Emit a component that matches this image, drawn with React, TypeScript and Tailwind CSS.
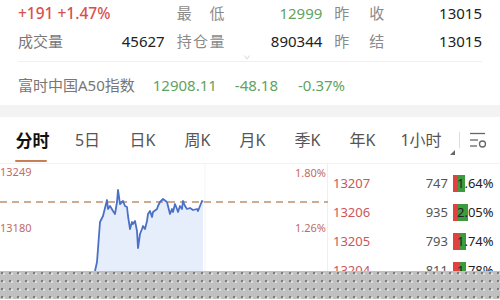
import React from "react";

const pts: [number, number][] = [
  [95, 272], [97, 263], [100, 223], [103, 217], [106, 205], [107, 201], [108, 210], [110, 207],
  [113, 212], [115, 215], [117, 203], [118, 191], [120, 205], [123, 202], [125, 207], [127, 208],
  [128, 217], [130, 230], [132, 223], [133, 225], [135, 222], [137, 232], [138, 249], [140, 235],
  [142, 230], [143, 227], [145, 230], [147, 222], [148, 215], [150, 212], [152, 218], [153, 213],
  [157, 210], [158, 207], [160, 203], [163, 200], [167, 203], [168, 207], [170, 215], [172, 210],
  [173, 213], [175, 205], [177, 210], [178, 213], [180, 207], [182, 210], [183, 202], [185, 207],
  [187, 210], [190, 209], [193, 211], [197, 210], [198, 212], [200, 207], [202, 202], [203, 203],
];

const TOP = 165;
const linePath = pts.map(([x, y], i) => `${i ? "L" : "M"}${x} ${y - TOP}`).join(" ");
const fillPath = `${linePath} L203 110 L95 110 Z`;

const book = [
  { p: "13207", v: "747", pct: "1.64%", red: 5, green: 7 },
  { p: "13206", v: "935", pct: "2.05%", red: 5, green: 10 },
  { p: "13205", v: "793", pct: "1.74%", red: 7, green: 6 },
  { p: "13204", v: "811", pct: "1.78%", red: 6, green: 7 },
];

const tabs = ["分时", "5日", "日K", "周K", "月K", "季K", "年K", "1小时"];

export default function App() {
  const font = { fontFamily: '"Noto Sans", "Noto Sans CJK SC", sans-serif' };
  return (
    <div className="w-[500px] h-[300px] overflow-hidden bg-white text-[15px] text-[#222]" style={font}>
      {/* header */}
      <div className="relative h-[62px] mx-[18px] border-b border-[#f0f0f0]">
        <div className="flex h-[27px] items-center leading-none">
          <div className="w-[147px] text-[#d8504d] text-[15.5px] font-medium">+191 +1.47%</div>
          <div className="ml-[12px] w-[48px] flex justify-between text-[#8a8a8a]"><span>最</span><span>低</span></div>
          <div className="w-[98px] text-right text-[#5fa35f]">12999</div>
          <div className="ml-[12px] w-[50px] flex justify-between text-[#8a8a8a]"><span>昨</span><span>收</span></div>
          <div className="w-[98px] text-right">13015</div>
        </div>
        <div className="flex h-[28px] items-center leading-none">
          <div className="w-[94px] text-[#777]">成交量</div>
          <div className="w-[53px] text-right">45627</div>
          <div className="ml-[12px] w-[48px] flex justify-between text-[#8a8a8a]"><span>持</span><span>仓</span><span>量</span></div>
          <div className="w-[98px] text-right">890344</div>
          <div className="ml-[12px] w-[50px] flex justify-between text-[#8a8a8a]"><span>昨</span><span>结</span></div>
          <div className="w-[98px] text-right">13015</div>
        </div>
        <svg className="absolute left-[226px] top-[55px]" width="6" height="5" viewBox="0 0 6 5">
          <path d="M0.5 0.5 L3 4 L5.5 0.5" fill="none" stroke="#d5d5d5" strokeWidth="1" />
        </svg>
      </div>
      <div className="flex h-[43px] items-center px-[18px] gap-[18px] leading-none pt-[4px]">
        <span className="text-[#777]">富时中国A50指数</span>
        <span className="text-[#5fa35f]">12908.11</span>
        <span className="text-[#5fa35f]">-48.18</span>
        <span className="text-[#5fa35f] ml-[2px]">-0.37%</span>
      </div>
      <div className="h-[12px] bg-[#f3f3f3]" />
      {/* tabs */}
      <div className="relative flex h-[47px] items-center pl-[5px] border-b border-[#f2f2f2] leading-none">
        {tabs.map((t, i) => (
          <div
            key={t}
            className={
              i === 0
                ? "relative w-[55px] h-full flex items-center justify-center text-[17px] font-bold text-[#111]"
                : i === 7
                ? "relative w-[62px] h-full flex items-center justify-center text-[16px] text-[#555]"
                : "relative w-[55px] h-full flex items-center justify-center text-[16px] text-[#555]"
            }
          >
            {t}
            {i === 0 && <div className="absolute bottom-[1px] left-[10px] w-[32px] h-[2px] bg-[#c97e58] rounded" />}
            {i === 7 && (
              <svg className="absolute right-[-3px] bottom-[8px]" width="5" height="5" viewBox="0 0 5 5">
                <path d="M5 0 L5 5 L0 5 Z" fill="#666" />
              </svg>
            )}
          </div>
        ))}
        <div className="w-px h-[16px] bg-[#dcdcdc] ml-[7px]" />
        <svg className="ml-[9px]" width="18" height="16" viewBox="0 0 18 16">
          <line x1="1" y1="1.5" x2="16" y2="1.5" stroke="#666" strokeWidth="1.3" />
          <line x1="1" y1="8" x2="9" y2="8" stroke="#666" strokeWidth="1.3" />
          <line x1="1" y1="14" x2="8" y2="14" stroke="#666" strokeWidth="1.3" />
          <circle cx="13.5" cy="12" r="3" fill="none" stroke="#666" strokeWidth="1.3" />
        </svg>
      </div>
      {/* chart area */}
      <div className="flex h-[107px] overflow-hidden">
        <div className="relative w-[328px] h-full border-r border-[#efefef]">
          <svg className="absolute inset-0" width="328" height="107" viewBox="0 0 328 107">
            <line x1="205" y1="0" x2="205" y2="107" stroke="#f4f4f4" strokeWidth="1" />
            <path d={fillPath} fill="#e6eefc" />
            <line x1="0" y1="38" x2="328" y2="38" stroke="#c0906e" strokeWidth="1.3" strokeDasharray="7 5" />
            <path d={linePath} fill="none" stroke="#4a70c8" strokeWidth="1.8" strokeLinejoin="round" />
          </svg>
          <span className="absolute left-0 top-[2px] text-[11px] leading-none text-[#c26b66]">13249</span>
          <span className="absolute right-[1px] top-[3px] text-[11px] leading-none text-[#c26b66]">1.80%</span>
          <span className="absolute left-0 top-[58px] text-[11px] leading-none text-[#c26b66]">13180</span>
          <span className="absolute right-[1px] top-[58px] text-[11px] leading-none text-[#c26b66]">1.26%</span>
        </div>
        <div className="flex-1 flex flex-col pt-[5px]">
          {book.map((r) => (
            <div key={r.p} className="flex h-[29px] items-center leading-none shrink-0">
              <span className="ml-[5px] w-[34px] text-[13px] text-[#c9575b]">{r.p}</span>
              <span className="w-[81px] text-right text-[13px] text-[#555]">{r.v}</span>
              <div className="relative ml-[5px] h-[17px] flex items-center">
                <div className="absolute left-0 top-0 h-[17px] flex">
                  <div className="h-full bg-[#e0423f]" style={{ width: r.red }} />
                  <div className="h-full bg-[#3d9a3f]" style={{ width: r.green }} />
                </div>
                <span className="relative ml-[4px] text-[13px] text-[#222]">{r.pct}</span>
              </div>
            </div>
          ))}
        </div>
      </div>
      <div className="h-[28px] bg-[#c0c0c0] bg-[radial-gradient(circle_at_2px_2px,#555555_0.6px,transparent_0.9px),radial-gradient(circle_at_4px_3px,#f0f0f0_0.6px,transparent_0.9px)] bg-size-[8px_8px]" />
    </div>
  );
}
